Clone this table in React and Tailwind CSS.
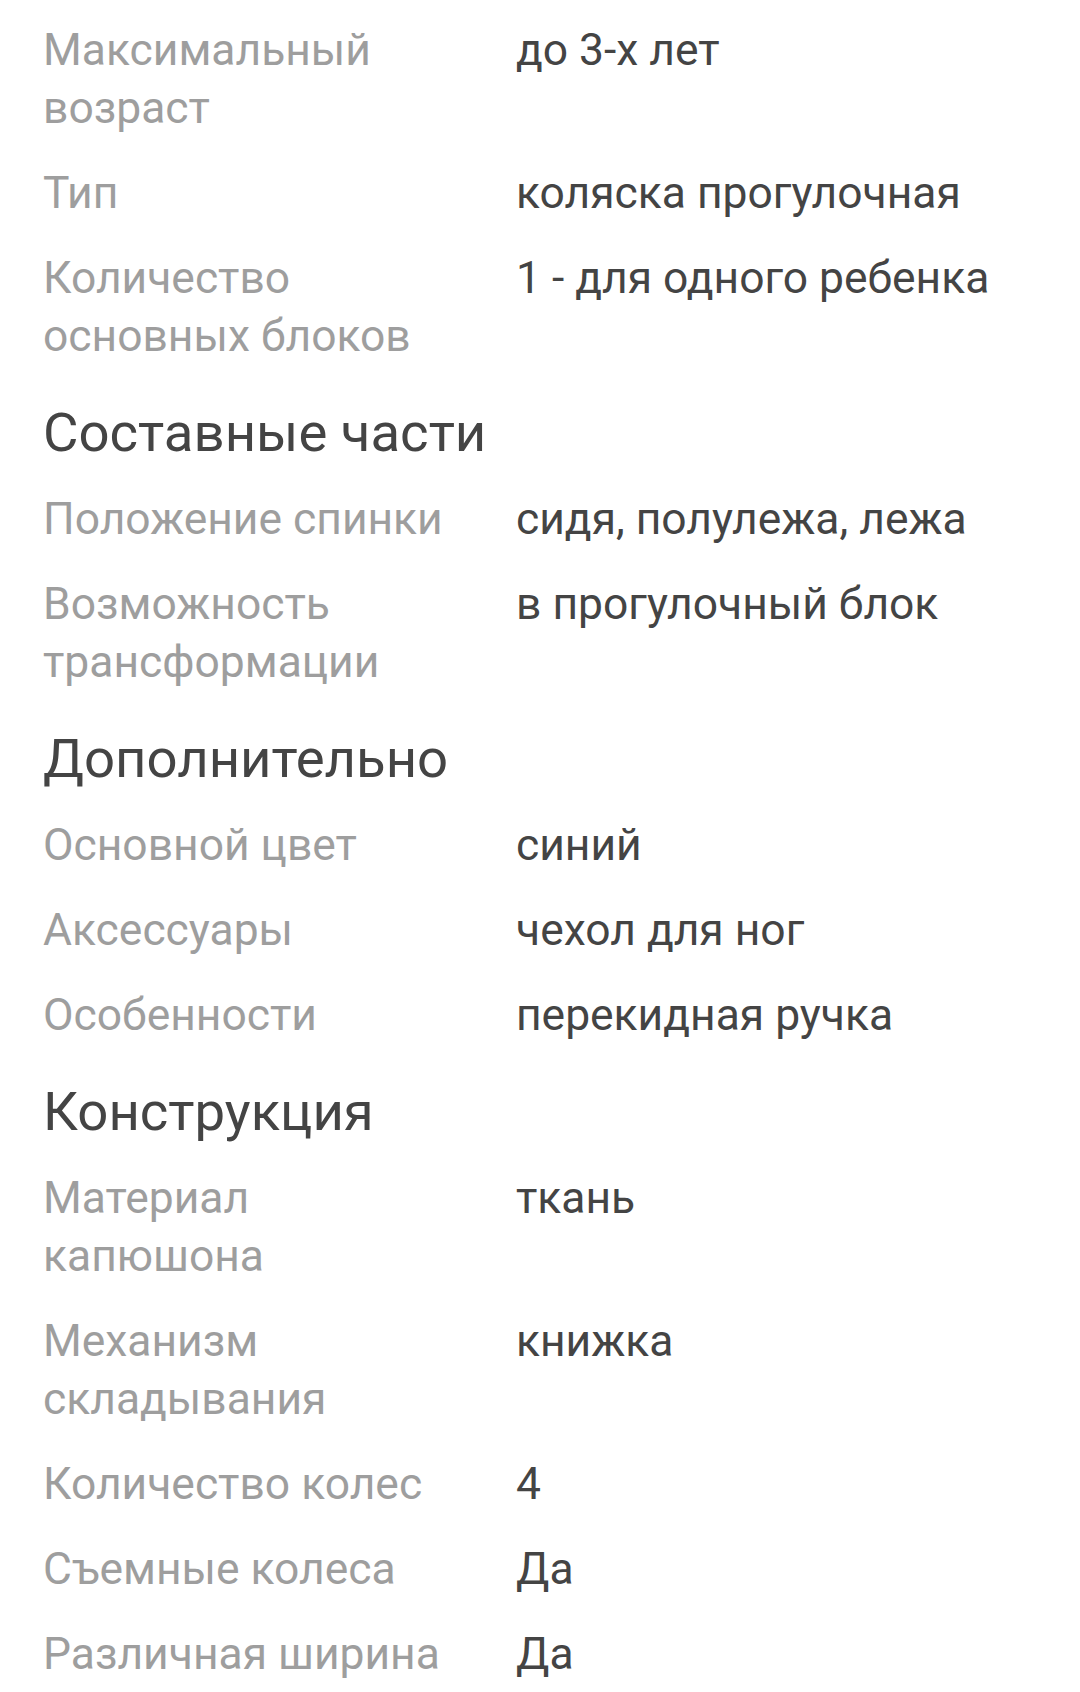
import React from "react"

const sections = [
  {
    title: null,
    rows: [
      ["Максимальный возраст", "до 3-х лет"],
      ["Тип", "коляска прогулочная"],
      ["Количество основных блоков", "1 - для одного ребенка"],
    ],
  },
  {
    title: "Составные части",
    rows: [
      ["Положение спинки", "сидя, полулежа, лежа"],
      ["Возможность трансформации", "в прогулочный блок"],
    ],
  },
  {
    title: "Дополнительно",
    rows: [
      ["Основной цвет", "синий"],
      ["Аксессуары", "чехол для ног"],
      ["Особенности", "перекидная ручка"],
    ],
  },
  {
    title: "Конструкция",
    rows: [
      ["Материал капюшона", "ткань"],
      ["Механизм складывания", "книжка"],
      ["Количество колес", "4"],
      ["Съемные колеса", "Да"],
      ["Различная ширина", "Да"],
    ],
  },
]

const Row = ({ label, value }) => (
  <div className="flex py-[13.6px] text-[44.4px] leading-[58px]">
    <div className="w-[473px] shrink-0 pr-[53px] text-[#9e9e9e]">{label}</div>
    <div className="flex-1 text-[#444444]">{value}</div>
  </div>
)

const App = () => {
  return (
    <div
      className="min-h-[1692px] w-[1080px] overflow-hidden bg-white pl-[43px] pr-6 pt-[7px]"
      style={{ fontFamily: "Roboto, 'Noto Sans', sans-serif" }}
    >
      {sections.map((section, i) => (
        <div key={i}>
          {section.title && (
            <h2 className="pt-[21.5px] pb-[12px] text-[54.5px] leading-[64px] text-[#444444]">{section.title}</h2>
          )}
          {section.rows.map(([label, value]) => (
            <Row key={label} label={label} value={value} />
          ))}
        </div>
      ))}
    </div>
  )
}

export default App
